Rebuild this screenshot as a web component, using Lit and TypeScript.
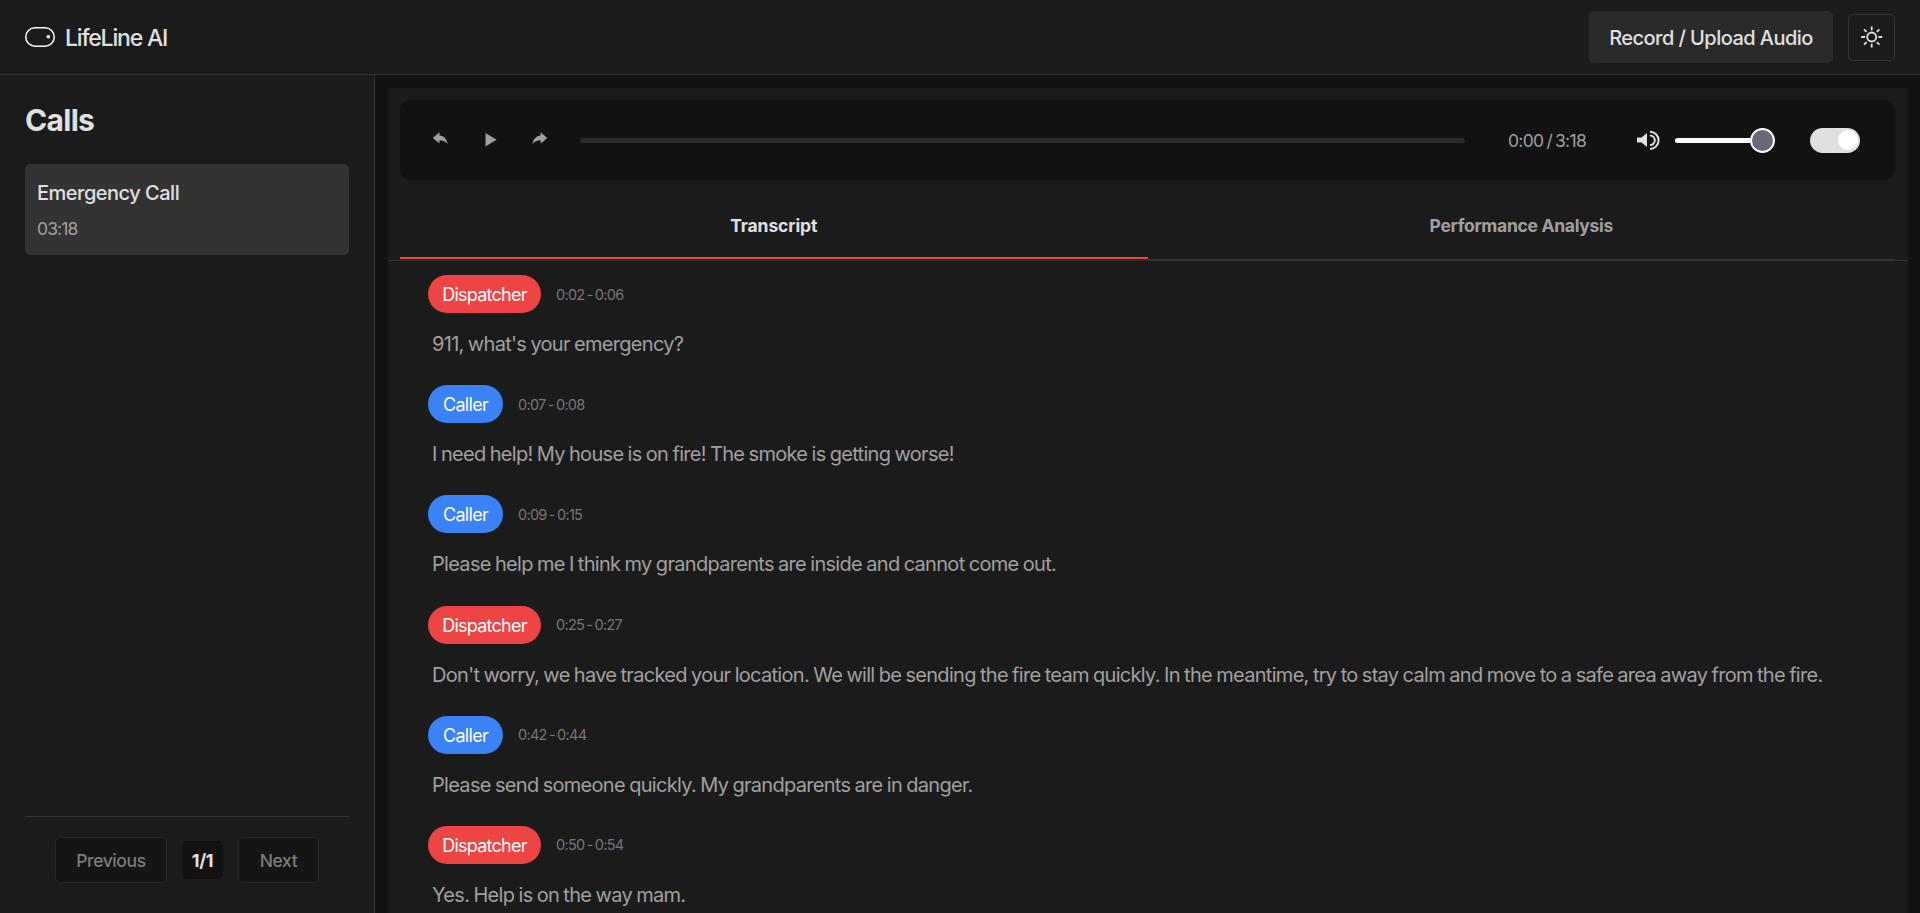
import { LitElement, html, css, nothing } from 'lit';
import { customElement, property, state } from 'lit/decorators.js';
import { classMap } from 'lit/directives/class-map.js';

interface Segment {
    speaker: 'Dispatcher' | 'Caller';
    start: string;
    end: string;
    text: string;
}

interface Call {
    title: string;
    duration: string;
}

const SEGMENTS: Segment[] = [
    { speaker: 'Dispatcher', start: '0:02', end: '0:06', text: "911, what's your emergency?" },
    { speaker: 'Caller', start: '0:07', end: '0:08', text: 'I need help! My house is on fire! The smoke is getting worse!' },
    { speaker: 'Caller', start: '0:09', end: '0:15', text: 'Please help me I think my grandparents are inside and cannot come out.' },
    { speaker: 'Dispatcher', start: '0:25', end: '0:27', text: "Don't worry, we have tracked your location. We will be sending the fire team quickly. In the meantime, try to stay calm and move to a safe area away from the fire." },
    { speaker: 'Caller', start: '0:42', end: '0:44', text: 'Please send someone quickly. My grandparents are in danger.' },
    { speaker: 'Dispatcher', start: '0:50', end: '0:54', text: 'Yes. Help is on the way mam.' },
];

@customElement('app-header')
export class AppHeader extends LitElement {
    static styles = css`
        :host {
            display: flex;
            align-items: center;
            justify-content: space-between;
            box-sizing: border-box;
            height: 75px;
            padding: 0 25px;
            background: #1b1b1b;
            border-bottom: 1px solid #333;
        }

        .brand {
            display: flex;
            align-items: center;
            gap: 10px;
            font-size: 23px;
            font-weight: 500;
            letter-spacing: -1.2px;
        }

        .brand span {
            padding-top: 2px;
        }

        .actions {
            display: flex;
            align-items: center;
            gap: 15px;
        }

        button {
            font-family: inherit;
            color: #e0e0e0;
            border-radius: 5px;
            padding: 0;
        }

        .upload {
            width: 244px;
            height: 52px;
            padding-top: 2px;
            background: #2a2a2a;
            border: none;
            font-size: 20px;
            font-weight: 500;
            letter-spacing: -0.55px;
            white-space: nowrap;
        }

        .theme {
            display: grid;
            place-items: center;
            width: 47px;
            height: 47px;
            background: none;
            border: 1px solid #333;
        }
    `;

    render() {
        return html`
            <div class="brand">
                <svg width="30" height="20" viewBox="0 0 30 20" fill="none">
                    <rect x="0.75" y="0.75" width="28.5" height="18.5" rx="9.25" stroke="#fff" stroke-width="1.5"/>
                    <circle cx="23.3" cy="9.8" r="1.8" fill="#fff"/>
                </svg>
                <span>LifeLine AI</span>
            </div>
            <div class="actions">
                <button class="upload">Record / Upload Audio</button>
                <button class="theme" aria-label="Toggle theme">
                    <svg width="22" height="22" viewBox="0 0 22 22" fill="none" stroke="#e0e0e0" stroke-width="1.8">
                        <circle cx="10.7" cy="11" r="4.5"/>
                        <path d="M10.7.5v3.8M10.7 17.7v3.8M.2 11H4M17.4 11h3.8M3 3.3l2.6 2.6M15.8 16.1l2.6 2.6M3 18.7l2.6-2.6M15.8 5.9l2.6-2.6"/>
                    </svg>
                </button>
            </div>
        `;
    }
}

@customElement('call-list')
export class CallList extends LitElement {
    static styles = css`
        :host {
            display: flex;
            flex-direction: column;
            box-sizing: border-box;
            width: 375px;
            padding: 25px 25px 30px;
            background: #1b1b1b;
            border-right: 1px solid #333;
        }

        h2 {
            margin: 1px 0 24px;
            font-size: 30px;
            line-height: 39px;
            font-weight: 700;
            letter-spacing: -0.7px;
        }

        .calls {
            flex: 1;
        }

        .call {
            box-sizing: border-box;
            height: 91px;
            padding: 12px;
            border-radius: 5px;
            background: #333;
        }

        .title {
            font-size: 20px;
            line-height: 34px;
            font-weight: 500;
            letter-spacing: -0.5px;
        }

        .duration {
            font-size: 17.5px;
            line-height: 38px;
            color: #a0a0a0;
            letter-spacing: -0.9px;
        }

        .pager {
            display: flex;
            align-items: center;
            justify-content: center;
            gap: 15px;
            padding-top: 20px;
            border-top: 1px solid #333;
        }

        button {
            box-sizing: border-box;
            height: 46px;
            padding: 0;
            background: #151515;
            border: 1px solid #262626;
            border-radius: 5px;
            color: #7c7c7c;
            font-family: inherit;
            font-size: 17.5px;
            font-weight: 500;
            letter-spacing: -0.4px;
        }

        .prev {
            width: 112px;
        }

        .next {
            width: 81px;
        }

        .page {
            box-sizing: border-box;
            width: 41px;
            height: 38px;
            padding-top: 1px;
            border-radius: 5px;
            background: #121212;
            font-size: 18px;
            line-height: 38px;
            font-weight: 700;
            letter-spacing: -0.4px;
            text-align: center;
        }
    `;

    @property({ type: Array }) calls: Call[] = [];

    render() {
        return html`
            <h2>Calls</h2>
            <div class="calls">
                ${this.calls.map(call => html`
                    <div class="call">
                        <div class="title">${call.title}</div>
                        <div class="duration">${call.duration}</div>
                    </div>
                `)}
            </div>
            <div class="pager">
                <button class="prev" disabled>Previous</button>
                <span class="page">1/1</span>
                <button class="next" disabled>Next</button>
            </div>
        `;
    }
}

@customElement('audio-player')
export class AudioPlayer extends LitElement {
    static styles = css`
        :host {
            display: flex;
            align-items: center;
            box-sizing: border-box;
            height: 80px;
            padding: 0 35px 0 32px;
            border-radius: 10px;
            background: #121212;
        }

        svg {
            display: block;
            flex: none;
        }

        .controls {
            display: flex;
            align-items: center;
            gap: 34px;
            margin-right: 32px;
            color: #a0a0a0;
        }

        .track {
            flex: 1;
            height: 5px;
            border-radius: 3px;
            background: #2a2a2a;
        }

        .time {
            width: 80px;
            margin: 0 49px 0 43px;
            font-size: 17.5px;
            color: #a0a0a0;
            letter-spacing: -0.7px;
            word-spacing: -1.2px;
            white-space: nowrap;
        }

        .volume {
            display: flex;
            align-items: center;
            width: 100px;
            margin: 0 35px 0 14px;
        }

        .level {
            flex: 1;
            height: 5px;
            border-radius: 3px 0 0 3px;
            background: #fff;
        }

        .knob {
            box-sizing: border-box;
            width: 25px;
            height: 25px;
            border: 2px solid #fff;
            border-radius: 50%;
            background: #6b6977;
        }

        .switch {
            display: flex;
            justify-content: flex-end;
            box-sizing: border-box;
            width: 50px;
            height: 25px;
            padding: 2px;
            border-radius: 13px;
            background: #e0e0e0;
        }

        .dot {
            width: 20px;
            height: 20px;
            border-radius: 50%;
            background: #fff;
        }
    `;

    render() {
        return html`
            <div class="controls">
                <svg width="16" height="16" viewBox="0 0 16 16" fill="currentColor">
                    <path d="M.8 6 7.5.3v3.3c4.300.3 7.200 3.200 8.200 8.700C13.500 9.300 11 8.300 7.500 8.300v3.200z"/>
                </svg>
                <svg width="16" height="16" viewBox="0 0 16 16" fill="currentColor">
                    <path d="M3.5 1 14.5 7.7 3.5 14.5z"/>
                </svg>
                <svg width="16" height="16" viewBox="0 0 16 16" fill="currentColor">
                    <path d="M15.3 6 8.600.3v3.300C4.300 3.900 1.400 6.800.4 12.300 2.600 9.300 5.100 8.300 8.600 8.300v3.200z"/>
                </svg>
            </div>
            <div class="track"></div>
            <div class="time">0:00 / 3:18</div>
            <svg width="24" height="20" viewBox="0 0 24 20">
                <path d="M0 7.5h4.5L10 3v14l-5.500-4.500H0z" fill="#e0e0e0"/>
                <path d="M13 5.500a4.800 4.800 0 0 1 0 9.600M13 1.700a8.600 8.600 0 0 1 0 17.200" fill="none" stroke="#e0e0e0" stroke-width="2"/>
            </svg>
            <div class="volume">
                <div class="level"></div>
                <div class="knob"></div>
            </div>
            <div class="switch"><div class="dot"></div></div>
        `;
    }
}

@customElement('call-transcript')
export class CallTranscript extends LitElement {
    static styles = css`
        :host {
            display: block;
            padding: 14px 40px 0;
        }

        .segment {
            height: 110.2px;
        }

        .meta {
            display: flex;
            align-items: center;
            gap: 15px;
        }

        .badge {
            box-sizing: border-box;
            width: 113px;
            height: 38px;
            padding-top: 1px;
            border-radius: 19px;
            background: #ef4444;
            color: #fff;
            font-size: 18px;
            line-height: 38px;
            letter-spacing: -0.75px;
            text-align: center;
        }

        .badge.caller {
            width: 75px;
            background: #3b82f6;
            letter-spacing: -0.7px;
        }

        .range {
            font-size: 14.5px;
            color: #777;
            letter-spacing: -0.7px;
            word-spacing: -1.2px;
        }

        p {
            margin: 14px 0 0 4px;
            font-size: 20px;
            line-height: 34px;
            color: #a0a0a0;
            letter-spacing: -0.7px;
            word-spacing: -0.7px;
            white-space: nowrap;
        }
    `;

    @property({ type: Array }) segments: Segment[] = [];

    render() {
        return this.segments.map(segment => html`
            <div class="segment">
                <div class="meta">
                    <span class=${classMap({ badge: true, caller: segment.speaker === 'Caller' })}>${segment.speaker}</span>
                    <span class="range">${segment.start} - ${segment.end}</span>
                </div>
                <p>${segment.text}</p>
            </div>
        `);
    }
}

@customElement('app-root')
export class AppRoot extends LitElement {
    static styles = css`
        :host {
            display: flex;
            flex-direction: column;
            height: 100vh;
            overflow: hidden;
            background: #121212;
            color: #e0e0e0;
            font-family: Inter, "Liberation Sans", sans-serif;
        }

        .body {
            display: flex;
            flex: 1;
            min-height: 0;
        }

        main {
            flex: 1;
            min-width: 0;
            margin: 13px 12px 0 13px;
            padding-top: 12px;
            overflow: hidden;
            background: #1b1b1b;
        }

        audio-player {
            margin: 0 13px 0 12px;
        }

        .tabs {
            display: flex;
            height: 80px;
            padding: 0 13px 0 12px;
            border-bottom: 1px solid #333;
        }

        .tab {
            flex: 1;
            box-sizing: border-box;
            height: 80px;
            padding-top: 30px;
            background: none;
            border: none;
            border-bottom: 1px solid #333;
            color: #a0a0a0;
            font-size: 17.5px;
            line-height: 32px;
            font-weight: 700;
            letter-spacing: -0.3px;
            text-align: center;
        }

        .tab.active {
            height: 79px;
            border-bottom: 2px solid #ef4836;
            color: #e0e0e0;
            letter-spacing: -0.1px;
        }
    `;

    @state() tab = 'Transcript';

    calls: Call[] = [{ title: 'Emergency Call', duration: '03:18' }];

    render() {
        return html`
            <app-header></app-header>
            <div class="body">
                <call-list .calls=${this.calls}></call-list>
                <main>
                    <audio-player></audio-player>
                    <div class="tabs">
                        ${['Transcript', 'Performance Analysis'].map(name => html`
                            <div class=${classMap({ tab: true, active: name === this.tab })} @click=${() => (this.tab = name)}>${name}</div>
                        `)}
                    </div>
                    ${this.tab === 'Transcript'
                        ? html`<call-transcript .segments=${SEGMENTS}></call-transcript>`
                        : nothing}
                </main>
            </div>
        `;
    }
}
